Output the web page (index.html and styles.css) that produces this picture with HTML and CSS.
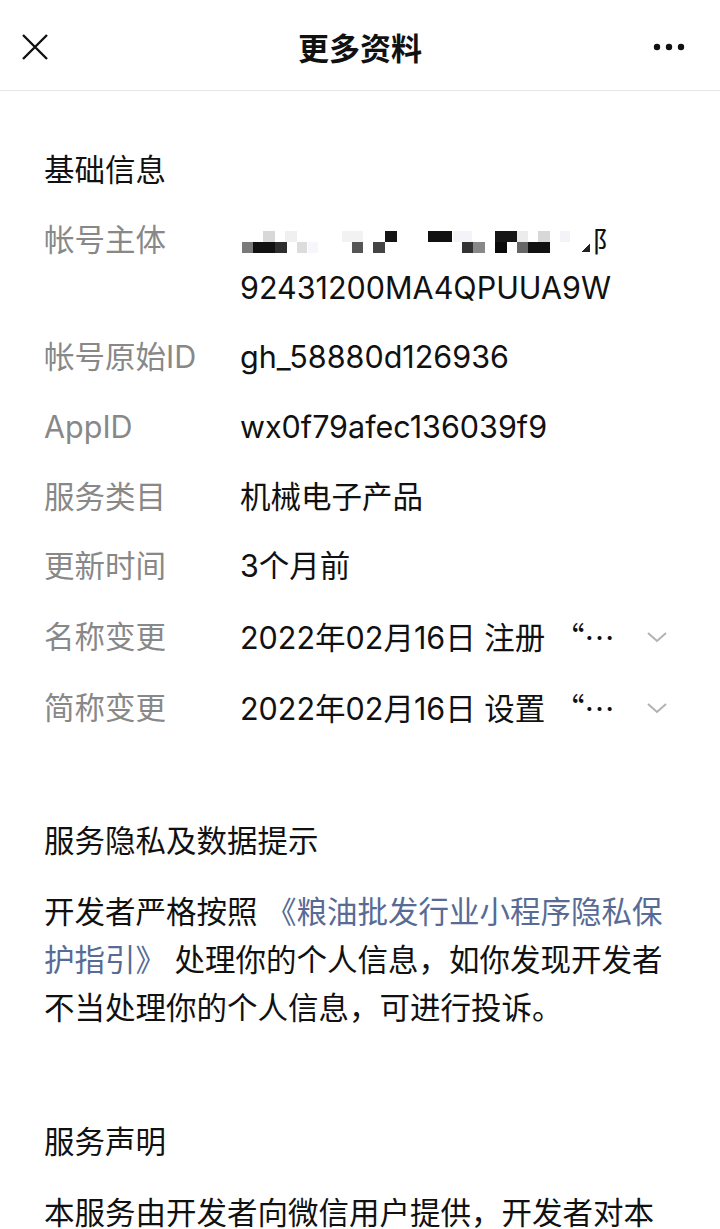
FILE: index.html
```html
<!DOCTYPE html>
<html lang="zh-CN">
<head>
    <meta charset="UTF-8" />
    <title>更多资料</title>
    <link rel="stylesheet" href="styles.css">
</head>
<body>

<div class="header">
    <svg class="close" width="28" height="28" viewBox="0 0 28 28">
        <path d="M2 2 L26 26 M26 2 L2 26" stroke="#111" stroke-width="2.4" fill="none" />
    </svg>
    <div class="title">更多资料</div>
    <svg class="more" width="32" height="8" viewBox="0 0 32 8">
        <circle cx="4" cy="4" r="3.2" fill="#111" />
        <circle cx="16" cy="4" r="3.2" fill="#111" />
        <circle cx="28" cy="4" r="3.2" fill="#111" />
    </svg>
</div>

<div class="section section-first">
    <div class="section-title">基础信息</div>

    <div class="row">
        <div class="label">帐号主体</div>
        <div class="value">
            <!-- blurred company name -->
            <div class="mosaic"><span class="mosaic-tail">阝</span></div>
            <div>92431200MA4QPUUA9W</div>
        </div>
    </div>

    <div class="row">
        <div class="label">帐号原始ID</div>
        <div class="value">gh_58880d126936</div>
    </div>

    <div class="row">
        <div class="label">AppID</div>
        <div class="value">wx0f79afec136039f9</div>
    </div>

    <div class="row">
        <div class="label">服务类目</div>
        <div class="value">机械电子产品</div>
    </div>

    <div class="row">
        <div class="label">更新时间</div>
        <div class="value">3个月前</div>
    </div>

    <div class="row">
        <div class="label">名称变更</div>
        <div class="value value-short">2022年02月16日 注册 <span class="cjk">“…</span></div>
        <svg class="chevron" width="22" height="14" viewBox="0 0 22 14">
            <path d="M2 3 L11 11 L20 3" stroke="#b2b2b2" stroke-width="2" fill="none" />
        </svg>
    </div>

    <div class="row">
        <div class="label">简称变更</div>
        <div class="value value-short">2022年02月16日 设置 <span class="cjk">“…</span></div>
        <svg class="chevron" width="22" height="14" viewBox="0 0 22 14">
            <path d="M2 3 L11 11 L20 3" stroke="#b2b2b2" stroke-width="2" fill="none" />
        </svg>
    </div>
</div>

<div class="section section-second">
    <div class="section-title">服务隐私及数据提示</div>
    <p class="text">开发者严格按照 <a class="link">《粮油批发行业小程序隐私保护指引》</a> 处理你的个人信息，如你发现开发者不当处理你的个人信息，可进行投诉。</p>
</div>

<div class="section section-third">
    <div class="section-title">服务声明</div>
    <p class="text">本服务由开发者向微信用户提供，开发者对本服务信息内容、数据资料及其运营行为等的真实性、合法性及有效性承担全部责任。</p>
</div>

</body>
</html>
```

FILE: styles.css
```css
body {
    margin: 0;
    background: #fff;
    color: #111;
    font-family: Inter, "Noto Sans CJK SC", sans-serif;
    font-size: 30.5px;
    line-height: 48px;
    height: 1229px;
    overflow: hidden;
}

.cjk {
    font-family: "Noto Sans CJK SC", sans-serif;
}

.header {
    height: 87px;
    padding: 3px 21px 0;
    display: grid;
    grid-template-columns: 1fr auto 1fr;
    align-items: center;
    border-bottom: 1px solid #e5e5e5;
}

.close {
    display: block;
}

.title {
    font-weight: bold;
    font-size: 31px;
    font-family: "Noto Sans CJK SC", sans-serif;
}

.more {
    display: block;
    justify-self: end;
    margin-right: 14px;
}

.section {
    padding: 0 44px;
}

.section-first {
    padding-top: 55px;
}

.section-second {
    padding-top: 73px;
}

.section-third {
    padding-top: 86px;
}

.section-title {
    margin-bottom: 23px;
}

.section-first .section-title {
    margin-bottom: 11px;
}

.row {
    display: flex;
    align-items: center;
    padding: 10.8px 0;
}

.row:has(.mosaic) {
    align-items: flex-start;
}

.label {
    width: 196px;
    flex-shrink: 0;
    color: #888;
}

.value {
    flex: 1;
    min-width: 0;
}

.value-short {
    white-space: nowrap;
    overflow: hidden;
}

.chevron {
    margin: 0 8px 0 6px;
    flex-shrink: 0;
}

.mosaic {
    position: relative;
    height: 48px;
    background:
        linear-gradient(#d8d8d8, #d8d8d8) 23px 15px / 12px 11px,
        linear-gradient(#f0f0f0, #f0f0f0) 45px 15px / 12px 11px,
        linear-gradient(#f2f2f2, #f2f2f2) 102px 15px / 21px 11px,
        linear-gradient(#151515, #151515) 145px 15px / 12px 11px,
        linear-gradient(#111, #111) 188px 15px / 24px 11px,
        linear-gradient(#f4f4f8, #f4f4f8) 213px 15px / 19px 11px,
        linear-gradient(#161616, #161616) 255px 15px / 22px 11px,
        linear-gradient(#ececec, #ececec) 277px 15px / 11px 11px,
        linear-gradient(#d8d8d8, #d8d8d8) 298px 15px / 12px 11px,
        linear-gradient(#f4f4f8, #f4f4f8) 320px 15px / 10px 11px,
        linear-gradient(#7a7a7a, #7a7a7a) 2px 26px / 11px 11px,
        linear-gradient(#111, #111) 13px 26px / 22px 11px,
        linear-gradient(#2e2e2e, #2e2e2e) 35px 26px / 12px 11px,
        linear-gradient(#dcdcdc, #dcdcdc) 57px 26px / 10px 11px,
        linear-gradient(#f6f6fb, #f6f6fb) 68px 26px / 10px 11px,
        linear-gradient(#555, #555) 112px 26px / 11px 11px,
        linear-gradient(#444, #444) 133px 26px / 12px 11px,
        linear-gradient(#333, #333) 222px 26px / 11px 11px,
        linear-gradient(#888, #888) 233px 26px / 12px 11px,
        linear-gradient(#0a0a0a, #0a0a0a) 255px 26px / 12px 11px,
        linear-gradient(#666, #666) 277px 26px / 11px 11px,
        linear-gradient(#111, #111) 288px 26px / 22px 11px,
        linear-gradient(to bottom right, transparent 50%, #222 50%) 342px 28px / 8px 8px;
    background-repeat: no-repeat;
}

.mosaic-tail {
    position: absolute;
    left: 352px;
    top: 0;
    font-family: "Noto Sans CJK SC", sans-serif;
    font-size: 28px;
}

.text {
    margin: 0;
}

.link {
    color: #576b95;
}
```
